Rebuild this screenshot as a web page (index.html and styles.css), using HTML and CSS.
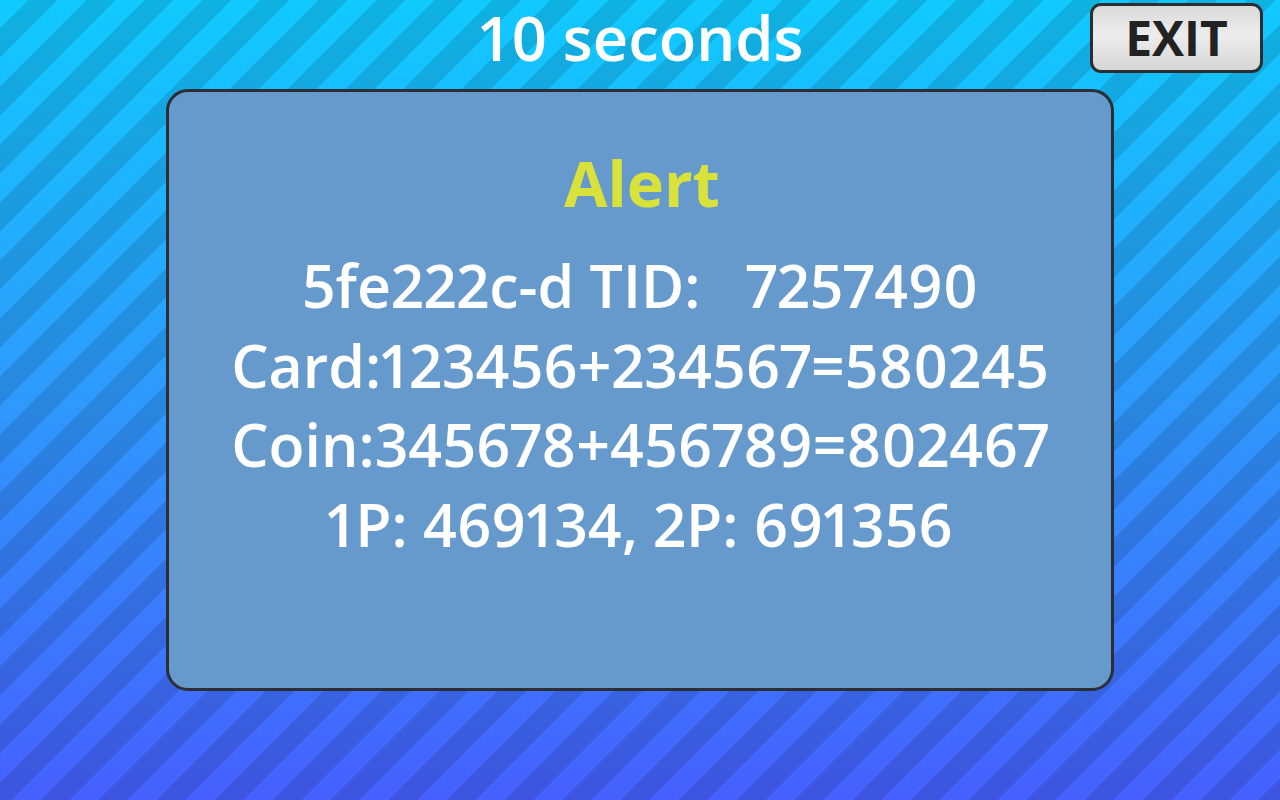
FILE: index.html
```html
<!DOCTYPE html>
<html>
<head>
<meta charset="utf-8">
<link rel="stylesheet" href="styles.css">
</head>
<body>
<div class="screen">
  <header class="top">
    <h1 class="timer">10 seconds</h1>
    <button class="exit">EXIT</button>
  </header>
  <section class="panel">
    <h2 class="alert-title">Alert</h2>
    <div class="lines">
      <p class="line">5fe222c-d TID:   7257490</p>
      <p class="line">Card:123456+234567=580245</p>
      <p class="line">Coin:345678+456789=802467</p>
      <p class="line">1P: 469134, 2P: 691356</p>
    </div>
  </section>
</div>
</body>
</html>
```
FILE: styles.css
```css
html, body {
  margin: 0;
  padding: 0;
  width: 1280px;
  height: 800px;
  overflow: hidden;
}
body {
  font-family: "Open Sans", "Noto Sans", sans-serif;
}
.screen {
  position: relative;
  width: 1280px;
  height: 800px;
  background:
    repeating-linear-gradient(135deg, rgba(0,0,0,0) 0px, rgba(0,0,0,0) 20.5px, rgba(0,0,0,0.12) 20.5px, rgba(0,0,0,0.12) 41px),
    linear-gradient(180deg, #10caff 0%, #2e99fd 50%, #4660ff 100%);
  display: flex;
  flex-direction: column;
  align-items: center;
}
.top {
  width: 100%;
  height: 89px;
  display: flex;
  justify-content: center;
}
.timer {
  margin: 0;
  height: 84px;
  color: #fff;
  font-size: 61.5px;
  font-weight: 600;
  line-height: 74px;
}
.exit {
  position: absolute;
  top: 3px;
  left: 1090px;
  width: 173px;
  height: 70px;
  border: 3px solid #2b2d31;
  border-radius: 11px;
  background: linear-gradient(180deg, #d9d9d9 0%, #ededed 45%, #d6d6d6 100%);
  color: #222;
  font-family: "Open Sans", "Noto Sans", sans-serif;
  font-size: 48px;
  font-weight: 700;
  line-height: 62px;
  padding: 0;
}
.panel {
  box-sizing: border-box;
  width: 948px;
  height: 602px;
  background: #6699cc;
  border: 3px solid #2b2e35;
  border-radius: 22px;
  display: flex;
  flex-direction: column;
  align-items: center;
  padding-top: 45px;
}
.alert-title {
  margin: 0;
  color: #d8e23a;
  font-size: 63px;
  font-weight: 700;
  line-height: 92px;
  padding-left: 4px;
}
.lines {
  margin-top: 17px;
  display: flex;
  flex-direction: column;
  align-items: center;
}
.line {
  margin: 0;
  color: #fff;
  font-size: 59px;
  font-weight: 600;
  line-height: 79.5px;
  white-space: pre;
  font-variant-numeric: proportional-nums;
}
```
